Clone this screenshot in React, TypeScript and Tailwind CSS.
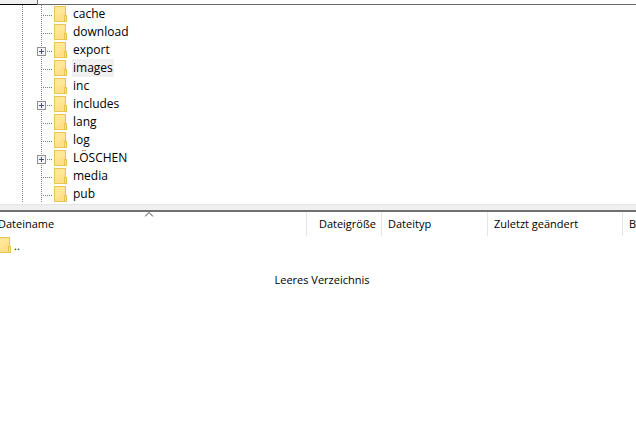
import React from "react";

type Folder = { name: string; expandable?: boolean; selected?: boolean };

const folders: Folder[] = [
    { name: "cache" },
    { name: "download" },
    { name: "export", expandable: true },
    { name: "images", selected: true },
    { name: "inc" },
    { name: "includes", expandable: true },
    { name: "lang" },
    { name: "log" },
    { name: "LÖSCHEN", expandable: true },
    { name: "media" },
    { name: "pub" },
];

const FolderIcon = () => (
    <svg width="13" height="16" viewBox="0 0 13 16" className="shrink-0" aria-hidden="true">
        <rect x="0.5" y="0.5" width="11" height="15" fill="#ffe08a" stroke="#eac65a" />
        <path d="M1 1h10v4L1 13z" fill="#ffe796" />
        <rect x="10.5" y="9.5" width="2" height="6" fill="#ffe38a" stroke="#e8c252" />
    </svg>
);

const ExpandButton = ({ name }: { name: string }) => (
    <button type="button" aria-label={`${name} öffnen`} className="absolute -left-1 top-[6px]">
        <svg width="9" height="9" viewBox="0 0 9 9" className="block">
            <rect x="0.5" y="0.5" width="8" height="8" fill="#f6f6f6" stroke="#919191" />
            <path d="M2 4.5h5M4.5 2v5" stroke="#41507f" />
        </svg>
    </button>
);

const verticalDots = "bg-[repeating-linear-gradient(to_bottom,#808080_0_1px,transparent_1px_2px)]";
const horizontalDots = "bg-[repeating-linear-gradient(to_right,#808080_0_1px,transparent_1px_2px)]";

const TreeRow = ({ name, expandable, selected }: Folder) => (
    <li className="flex h-[18px] items-center pl-[22px]">
        <span className={`h-full w-px shrink-0 ${verticalDots}`} />
        <span className="relative ml-[18px] flex h-full w-[13px] shrink-0">
            <span className={`h-full w-px ${verticalDots}`} />
            <span className={`mt-[10px] ml-px h-px w-[9px] ${horizontalDots}`} />
            {expandable && <ExpandButton name={name} />}
        </span>
        <FolderIcon />
        <span className={`ml-[5px] px-px ${selected ? "bg-[#f0f0f0]" : ""}`}>
            {name}
        </span>
    </li>
);

const RemoteTree = () => (
    <section>
        <div className="flex h-[5px]">
            <div className="w-[37px] border-b border-black bg-[#f0f0f0]" />
            <div className="flex-1 border-b border-l border-[#696969]" />
        </div>
        <ul>
            {folders.map((folder) => (
                <TreeRow key={folder.name} {...folder} />
            ))}
        </ul>
    </section>
);

const headCell = "border-r border-[#e5e5e5] px-[6px] text-left font-normal";

const FileList = () => (
    <section className="-mr-4 -ml-2 text-[11px]">
        <table className="w-full table-fixed border-separate border-spacing-0">
            <colgroup>
                <col className="w-[315px]" />
                <col className="w-[75px]" />
                <col className="w-[106px]" />
                <col className="w-[135px]" />
                <col />
            </colgroup>
            <thead>
                <tr className="h-6">
                    <th className={headCell} aria-sort="ascending">
                        <button type="button" className="relative block w-full text-left">
                            Dateiname
                            <svg width="9" height="5" viewBox="0 0 9 5" className="absolute -top-[3px] left-1/2 -translate-x-1/2" fill="none" aria-hidden="true">
                                <path d="M0.5 4.5l4-4 4 4" stroke="#404040" />
                            </svg>
                        </button>
                    </th>
                    <th className="border-r border-[#e5e5e5] px-[5px] text-right font-normal">Dateigröße</th>
                    <th className={headCell}>Dateityp</th>
                    <th className={headCell}>Zuletzt geändert</th>
                    <th className="px-[6px] text-left font-normal">B</th>
                </tr>
            </thead>
            <tbody>
                <tr className="h-[18px]">
                    <td colSpan={5} className="px-[6px]">
                        <div className="flex items-center gap-[3px]">
                            <FolderIcon />
                            <span className="pt-0.5 leading-4">..</span>
                        </div>
                    </td>
                </tr>
            </tbody>
        </table>
        <p className="mt-[17px] text-center">Leeres Verzeichnis</p>
    </section>
);

const App = () => {
    return (
        <main className="min-h-screen overflow-hidden bg-white font-['Open_Sans','Noto_Sans',sans-serif] text-[12px] leading-[18px] text-black">
            <RemoteTree />
            {/* splitter between the tree and the list */}
            <div className="mt-px h-2 cursor-row-resize border-t border-b-2 border-t-[#e3e3e3] border-b-[#707070] bg-[#f0f0f0]" />
            <FileList />
        </main>
    );
};

export default App;
